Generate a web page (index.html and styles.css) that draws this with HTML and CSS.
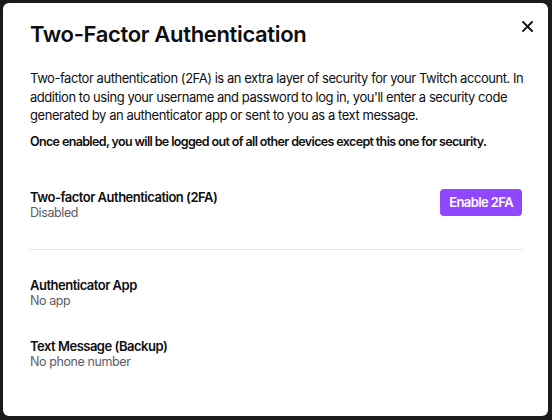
FILE: index.html
```html
<!DOCTYPE html>
<html>
<head>
<meta charset="utf-8">
<link rel="stylesheet" href="styles.css">
</head>
<body>
<div class="modal">
  <button class="close" aria-label="Close">
    <svg width="11" height="11" viewBox="0 0 11 11"><path d="M1 1L10 10M10 1L1 10" stroke="#0e0e10" stroke-width="1.9" stroke-linecap="square"/></svg>
  </button>
  <h1 class="title">Two-Factor Authentication</h1>
  <p class="intro">Two-factor authentication (2FA) is an extra layer of security for your Twitch account. In addition to using your username and password to log in, you'll enter a security code generated by an authenticator app or sent to you as a text message.</p>
  <p class="warn">Once enabled, you will be logged out of all other devices except this one for security.</p>
  <div class="row status">
    <div class="info">
      <div class="label">Two-factor Authentication (2FA)</div>
      <div class="sub">Disabled</div>
    </div>
    <button class="enable">Enable 2FA</button>
  </div>
  <div class="divider"></div>
  <div class="item first">
    <div class="label">Authenticator App</div>
    <div class="sub">No app</div>
  </div>
  <div class="item second">
    <div class="label">Text Message (Backup)</div>
    <div class="sub">No phone number</div>
  </div>
</div>
</body>
</html>
```
FILE: styles.css
```css
html, body {
  margin: 0;
  padding: 0;
  background: #1b1b1d;
  height: 100%;
}
body {
  padding: 3px 4px 4px 3px;
  box-sizing: border-box;
  font-family: Inter, "Noto Sans", sans-serif;
  color: #0e0e10;
}
.modal {
  position: relative;
  background: #ffffff;
  border-radius: 6px;
  height: 413px;
  box-sizing: border-box;
  padding: 16px 26px 0 27px;
}
.close {
  position: absolute;
  top: 18px;
  right: 15px;
  width: 11px;
  height: 11px;
  padding: 0;
  border: 0;
  background: none;
  display: flex;
}
.title {
  margin: 0;
  font-size: 22px;
  line-height: 30px;
  font-weight: 600;
  letter-spacing: -0.34px;
}
.intro {
  margin: 20px -12px 0 0;
  font-size: 13px;
  line-height: 18.5px;
  font-weight: 400;
  letter-spacing: -0.45px;
}
.warn {
  margin: 8.5px 0 0 0;
  font-size: 12.5px;
  line-height: 18.5px;
  font-weight: 600;
  letter-spacing: -0.64px;
  white-space: nowrap;
}
.row {
  display: flex;
  justify-content: space-between;
  align-items: flex-start;
}
.status {
  margin-top: 37px;
}
.label {
  font-size: 13px;
  line-height: 16px;
  font-weight: 600;
  letter-spacing: -0.5px;
}
.sub {
  font-size: 12.5px;
  line-height: 16px;
  color: #5c5c66;
  letter-spacing: -0.4px;
}
.enable {
  background: #9147ff;
  color: #fff;
  border: 0;
  border-radius: 4px;
  font-family: Inter, "Noto Sans", sans-serif;
  font-size: 13px;
  font-weight: 600;
  letter-spacing: -0.6px;
  height: 27px;
  padding: 0 9px;
}
.divider {
  height: 1px;
  background: #e6e6ea;
  margin-top: 28px;
}
.first {
  margin-top: 27px;
}
.second {
  margin-top: 29px;
}
```
